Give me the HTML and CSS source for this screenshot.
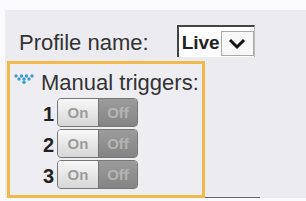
FILE: index.html
```html
<!DOCTYPE html>
<html>

<head>
  <meta charset="UTF-8">
  <title>Profile - Manual triggers</title>
  <link rel="stylesheet" href="styles.css">
</head>

<body>
  <div class="panel">
    <div class="profile-row">
      <label for="profile">Profile name:</label>
      <div class="select-box">
        <span class="select-value">Live</span>
        <span class="select-btn">
          <svg width="20" height="12" viewBox="0 0 20 12">
            <path d="M3 2 L10 9 L17 2" fill="none" stroke="#111" stroke-width="3" />
          </svg>
        </span>
      </div>
    </div>

    <div class="triggers">
      <div class="triggers-head">
        <svg class="dots" width="20" height="10" viewBox="0 0 20 10">
          <circle cx="2" cy="2" r="1.7" fill="#3a9bd0" />
          <circle cx="7.5" cy="2" r="1.7" fill="#3a9bd0" />
          <circle cx="12.5" cy="2" r="1.7" fill="#3a9bd0" />
          <circle cx="18" cy="2" r="1.7" fill="#3a9bd0" />
          <circle cx="5" cy="5" r="1.7" fill="#3a9bd0" />
          <circle cx="10" cy="5" r="1.7" fill="#3a9bd0" />
          <circle cx="15" cy="5" r="1.7" fill="#3a9bd0" />
          <circle cx="10" cy="8.3" r="1.7" fill="#3a9bd0" />
        </svg>
        <span>Manual triggers:</span>
      </div>

      <div class="trigger-row">
        <span class="num">1</span>
        <div class="toggle"><span class="on">On</span><span class="off">Off</span></div>
      </div>
      <div class="trigger-row">
        <span class="num">2</span>
        <div class="toggle"><span class="on">On</span><span class="off">Off</span></div>
      </div>
      <div class="trigger-row">
        <span class="num">3</span>
        <div class="toggle"><span class="on">On</span><span class="off">Off</span></div>
      </div>
    </div>
    <div class="panel-line"></div>
  </div>
</body>

</html>
```

FILE: styles.css
```css
body {
  margin: 0;
  padding-top: 10px;
  background: #fafafc;
  font-family: "Liberation Sans", Arial, sans-serif;
  overflow: hidden;
}

.panel {
  margin-left: 5px;
  padding: 14px 0 0 2px;
  height: 174px;
  background: #ececf0;
  position: relative;
}

.profile-row {
  display: flex;
  align-items: center;
  gap: 28px;
  padding-left: 12px;
  height: 33px;
}

.profile-row label {
  font-size: 22px;
  color: #333;
  padding-top: 4px;
}

.select-box {
  display: flex;
  align-items: center;
  width: 78px;
  height: 32px;
  background: #fff;
  border-top: 2px solid #444;
  border-left: 2px solid #444;
  border-right: 1px solid #bbb;
  box-sizing: border-box;
}

.select-value {
  width: 42px;
  font-weight: bold;
  font-size: 19px;
  color: #222;
  padding-left: 3px;
  overflow: hidden;
  white-space: nowrap;
  padding-top: 3px;
  box-sizing: border-box;
}

.select-btn {
  display: flex;
  align-items: center;
  justify-content: center;
  width: 33px;
  height: 25px;
  margin-top: 4px;
  background: #f8f8f8;
  border: 1px solid #aaa;
  box-sizing: border-box;
}

.triggers {
  margin-top: 4px;
  width: 198px;
  height: 137px;
  border: 3px solid #f1b84a;
  box-sizing: border-box;
  background: #eeeef2;
  padding-top: 6px;
}

.triggers-head {
  display: flex;
  align-items: flex-start;
  font-size: 22px;
  line-height: 26px;
  color: #333;
  padding-left: 4px;
  white-space: nowrap;
}

.dots {
  margin-top: 4px;
  margin-right: 7px;
}

.trigger-row {
  display: flex;
  align-items: center;
  padding-left: 33px;
  margin-top: 2px;
}

.num {
  width: 14px;
  font-weight: bold;
  font-size: 20px;
  color: #222;
  padding-top: 4px;
}

.toggle {
  display: flex;
  width: 81px;
  height: 29px;
  border: 1px solid #777;
  border-radius: 4px;
  overflow: hidden;
  box-sizing: border-box;
  font-size: 15px;
  box-shadow: inset 0 -1px 0 #666;
}

.toggle span {
  display: flex;
  align-items: center;
  justify-content: center;
}

.toggle .on {
  width: 41px;
  background: linear-gradient(#f8f8f8, #d6d6d6);
  color: #9c9c9c;
  border-right: 1px solid #777;
  box-sizing: border-box;
  font-weight: bold;
}

.toggle .off {
  flex: 1;
  background: linear-gradient(#9c9c9c, #848484);
  color: #b4b4b4;
  font-weight: bold;
}

.panel-line {
  position: absolute;
  left: 200px;
  bottom: 0;
  width: 55px;
  height: 1px;
  background: #666;
}
```
